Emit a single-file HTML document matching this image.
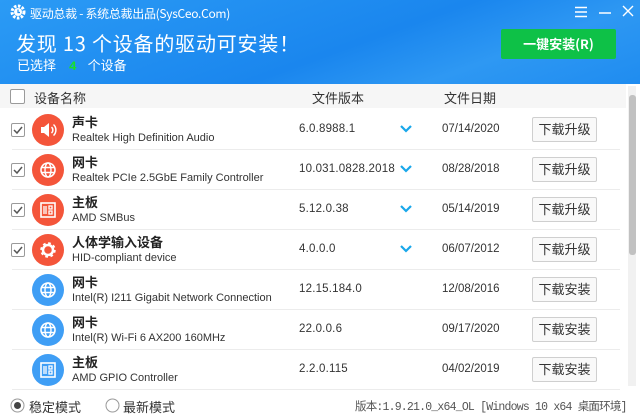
<!DOCTYPE html>
<html><head><meta charset="utf-8"><style>
*{margin:0;padding:0;box-sizing:border-box}
body{width:640px;height:419px;overflow:hidden;background:#fff;font-family:"Liberation Sans","Noto Sans CJK SC",sans-serif;position:relative;font-size:12px;color:#333}
.hdr{position:absolute;left:0;top:0;width:640px;height:84px;background:linear-gradient(160deg,#2b9bf5 0%,#1a86ee 55%,#2e98f3 75%,#1f8cf0 100%);color:#fff}
.abs{position:absolute;white-space:nowrap}
.colh{position:absolute;left:0;top:84px;width:626px;height:24px;background:#f6f6f6;font-size:13px;color:#333}
.cb{position:absolute;width:14px;height:14px;border:1px solid #9a9a9a;background:#fff;border-radius:2px}
.row{position:absolute;left:0;width:620px;height:40px}
.sep{position:absolute;left:12px;right:0;bottom:0;height:1px;background:#ececec}
.ic{position:absolute;left:32px;top:4px;width:32px;height:32px;border-radius:50%}
.o{background:#f4553a}.b{background:#3f9ef5}
.t1{position:absolute;left:72px;top:2px;font-size:13px;font-weight:bold;color:#222;font-family:"Noto Sans CJK SC",sans-serif}
.t2{position:absolute;left:72px;top:22px;font-size:11px;color:#333;font-family:"Liberation Sans",sans-serif}
.ver{position:absolute;left:299px;top:13px;font-size:11.5px;color:#333;font-family:"Liberation Sans",sans-serif;letter-spacing:0.2px}
.dt{position:absolute;left:442px;top:13px;font-size:11.5px;color:#333;font-family:"Liberation Sans",sans-serif}
.btn{position:absolute;left:532px;top:7px;width:65px;height:25px;border:1px solid #cfcfcf;background:#f9f9f9;border-radius:2px;font-size:13px;text-align:center;line-height:23px;color:#333}
.chev{position:absolute;left:400px;top:15px}
</style></head><body>
<div class="hdr">
<svg class="abs" style="left:10px;top:4px" width="16" height="16" viewBox="0 0 16 16"><circle cx="8" cy="8" r="6" fill="none" stroke="#fff" stroke-width="3" stroke-dasharray="2.5 1.5"/><circle cx="8" cy="8" r="4" fill="#fff"/><path d="M8 5.5v3h2" stroke="#1e8ff0" stroke-width="1.2" fill="none"/></svg>
<div class="abs" style="left:30px;top:5px;font-size:12px;font-family:'Noto Sans CJK SC','Liberation Mono',monospace;letter-spacing:-0.3px">驱动总裁 - 系统总裁出品(SysCeo.Com)</div>
<div class="abs" style="left:16px;top:28px;font-size:20px;font-family:'Noto Sans CJK SC',sans-serif;letter-spacing:0.8px">发现 13 个设备的驱动可安装！</div>
<div class="abs" style="left:17px;top:55px;font-size:13px;font-family:'Noto Sans CJK SC',sans-serif">已选择 <b style="color:#18e02a;margin:0 8px 0 10px;font-family:'Liberation Mono',monospace">4</b> 个设备</div>
<svg class="abs" style="left:574px;top:6px" width="14" height="12"><path d="M1 1.5h12M1 6h12M1 10.5h12" stroke="#fff" stroke-width="1.5"/></svg>
<svg class="abs" style="left:598px;top:6px" width="14" height="12"><path d="M1 7h12" stroke="#fff" stroke-width="1.5"/></svg>
<svg class="abs" style="left:622px;top:5px" width="12" height="12"><path d="M1 1l10 10M11 1L1 11" stroke="#fff" stroke-width="1.4"/></svg>
<div class="abs" style="left:501px;top:29px;width:115px;height:30px;background:#0ec147;border-radius:2px;text-align:center;line-height:30px;font-size:13px;font-weight:bold;font-family:'Noto Sans CJK SC',sans-serif">一键安装(R)</div>
</div>
<div class="colh">
<div class="cb" style="left:10px;top:5px;width:15px;height:15px"></div>
<div class="abs" style="left:34px;top:4px">设备名称</div>
<div class="abs" style="left:312px;top:4px">文件版本</div>
<div class="abs" style="left:444px;top:4px">文件日期</div>
</div>
<div class="abs" style="left:628px;top:86px;width:8px;height:300px;background:#f1f1f1"></div>
<div class="abs" style="left:629px;top:95px;width:7px;height:160px;background:#c1c1c1;border-radius:3px"></div>

<div class="row" style="top:110px"><div class="cb" style="left:11px;top:13px"></div><svg class="abs" style="left:12px;top:15px" width="12" height="10"><path d="M2 5l3 3 5-6" stroke="#555" stroke-width="1.5" fill="none"/></svg>
<div class="ic o"><svg width="32" height="32"><path d="M9 13h3l5-4v14l-5-4H9z" fill="#fff"/><path d="M19.5 13a4 4 0 0 1 0 6M21.5 10.5a7.5 7.5 0 0 1 0 11" stroke="#fff" stroke-width="1.5" fill="none"/></svg></div>
<div class="t1">声卡</div><div class="t2">Realtek High Definition Audio</div><div class="ver">6.0.8988.1</div><svg class="chev" width="12" height="8"><path d="M1 1l5 5 5-5" stroke="#19a7ea" stroke-width="2.2" fill="none"/></svg><div class="dt">07/14/2020</div><div class="btn">下载升级</div><div class="sep"></div></div>

<div class="row" style="top:150px"><div class="cb" style="left:11px;top:13px"></div><svg class="abs" style="left:12px;top:15px" width="12" height="10"><path d="M2 5l3 3 5-6" stroke="#555" stroke-width="1.5" fill="none"/></svg>
<div class="ic o"><svg width="32" height="32"><circle cx="16" cy="16" r="7" fill="none" stroke="#fff" stroke-width="1.6"/><ellipse cx="16" cy="16" rx="3" ry="7" fill="none" stroke="#fff" stroke-width="1.4"/><path d="M9 13.5h14M9 18.5h14" stroke="#fff" stroke-width="1.4"/></svg></div>
<div class="t1">网卡</div><div class="t2">Realtek PCIe 2.5GbE Family Controller</div><div class="ver">10.031.0828.2018</div><svg class="chev" width="12" height="8"><path d="M1 1l5 5 5-5" stroke="#19a7ea" stroke-width="2.2" fill="none"/></svg><div class="dt">08/28/2018</div><div class="btn">下载升级</div><div class="sep"></div></div>

<div class="row" style="top:190px"><div class="cb" style="left:11px;top:13px"></div><svg class="abs" style="left:12px;top:15px" width="12" height="10"><path d="M2 5l3 3 5-6" stroke="#555" stroke-width="1.5" fill="none"/></svg>
<div class="ic o"><svg width="32" height="32"><rect x="9" y="9" width="14" height="14" fill="none" stroke="#fff" stroke-width="1.6"/><path d="M12 12v8M14 12v8M17 12h3v3h-3zM17 17h3v3h-3z" stroke="#fff" stroke-width="1.3" fill="none"/></svg></div>
<div class="t1">主板</div><div class="t2">AMD SMBus</div><div class="ver">5.12.0.38</div><svg class="chev" width="12" height="8"><path d="M1 1l5 5 5-5" stroke="#19a7ea" stroke-width="2.2" fill="none"/></svg><div class="dt">05/14/2019</div><div class="btn">下载升级</div><div class="sep"></div></div>

<div class="row" style="top:230px"><div class="cb" style="left:11px;top:13px"></div><svg class="abs" style="left:12px;top:15px" width="12" height="10"><path d="M2 5l3 3 5-6" stroke="#555" stroke-width="1.5" fill="none"/></svg>
<div class="ic o"><svg width="32" height="32"><circle cx="16" cy="16" r="6" fill="none" stroke="#fff" stroke-width="3.5" stroke-dasharray="2.4 2.3"/><circle cx="16" cy="16" r="5" fill="none" stroke="#fff" stroke-width="2.5"/></svg></div>
<div class="t1">人体学输入设备</div><div class="t2">HID-compliant device</div><div class="ver">4.0.0.0</div><svg class="chev" width="12" height="8"><path d="M1 1l5 5 5-5" stroke="#19a7ea" stroke-width="2.2" fill="none"/></svg><div class="dt">06/07/2012</div><div class="btn">下载升级</div><div class="sep"></div></div>

<div class="row" style="top:270px">
<div class="ic b"><svg width="32" height="32"><circle cx="16" cy="16" r="7" fill="none" stroke="#fff" stroke-width="1.6"/><ellipse cx="16" cy="16" rx="3" ry="7" fill="none" stroke="#fff" stroke-width="1.4"/><path d="M9 13.5h14M9 18.5h14" stroke="#fff" stroke-width="1.4"/></svg></div>
<div class="t1">网卡</div><div class="t2">Intel(R) I211 Gigabit Network Connection</div><div class="ver">12.15.184.0</div><div class="dt">12/08/2016</div><div class="btn">下载安装</div><div class="sep"></div></div>

<div class="row" style="top:310px">
<div class="ic b"><svg width="32" height="32"><circle cx="16" cy="16" r="7" fill="none" stroke="#fff" stroke-width="1.6"/><ellipse cx="16" cy="16" rx="3" ry="7" fill="none" stroke="#fff" stroke-width="1.4"/><path d="M9 13.5h14M9 18.5h14" stroke="#fff" stroke-width="1.4"/></svg></div>
<div class="t1">网卡</div><div class="t2">Intel(R) Wi-Fi 6 AX200 160MHz</div><div class="ver">22.0.0.6</div><div class="dt">09/17/2020</div><div class="btn">下载安装</div><div class="sep"></div></div>

<div class="row" style="top:350px">
<div class="ic b"><svg width="32" height="32"><rect x="9" y="9" width="14" height="14" fill="none" stroke="#fff" stroke-width="1.6"/><path d="M12 12v8M14 12v8M17 12h3v3h-3zM17 17h3v3h-3z" stroke="#fff" stroke-width="1.3" fill="none"/></svg></div>
<div class="t1">主板</div><div class="t2">AMD GPIO Controller</div><div class="ver">2.2.0.115</div><div class="dt">04/02/2019</div><div class="btn">下载安装</div><div class="sep"></div></div>

<svg class="abs" style="left:10px;top:398px" width="15" height="15"><circle cx="7.5" cy="7.5" r="6.5" fill="#fff" stroke="#999"/><circle cx="7.5" cy="7.5" r="3.5" fill="#444"/></svg>
<div class="abs" style="left:29px;top:397px;font-size:13px">稳定模式</div>
<svg class="abs" style="left:105px;top:398px" width="15" height="15"><circle cx="7.5" cy="7.5" r="6.5" fill="#fff" stroke="#999"/></svg>
<div class="abs" style="left:123px;top:397px;font-size:13px">最新模式</div>
<div class="abs" style="left:355px;top:398px;font-size:11.5px;color:#555;font-family:'Liberation Mono','Noto Sans CJK SC',monospace;letter-spacing:-0.8px">版本:1.9.21.0_x64_OL [Windows 10 x64 桌面环境]</div>
</body></html>
